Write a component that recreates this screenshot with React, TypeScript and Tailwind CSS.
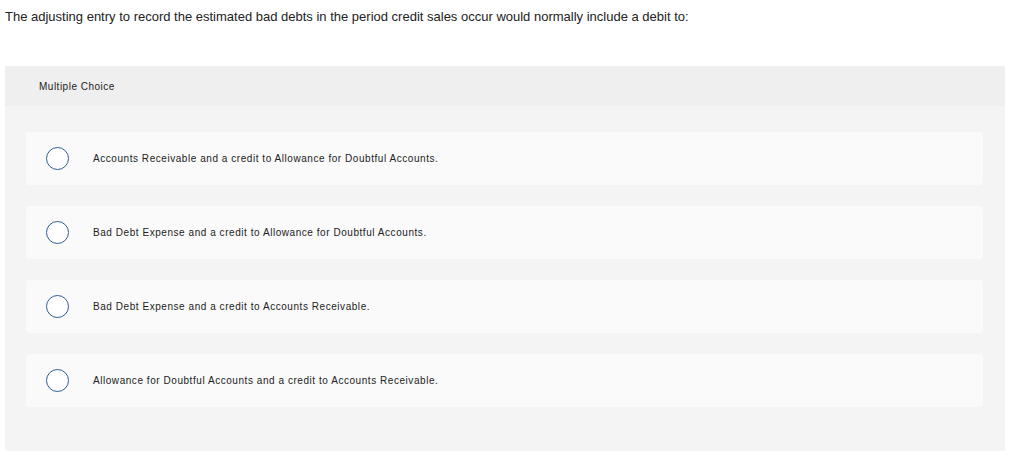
import React from "react";

const options = [
  "Accounts Receivable and a credit to Allowance for Doubtful Accounts.",
  "Bad Debt Expense and a credit to Allowance for Doubtful Accounts.",
  "Bad Debt Expense and a credit to Accounts Receivable.",
  "Allowance for Doubtful Accounts and a credit to Accounts Receivable.",
];

export default function App() {
  return (
    <div
      className="w-[1024px] h-[468px] bg-white text-[#222]"
      style={{ fontFamily: '"Liberation Sans", Arial, sans-serif' }}
    >
      <p className="pl-[5px] pt-[9px] text-[13px] leading-[15px] text-[#222]">
        The adjusting entry to record the estimated bad debts in the period credit sales occur would normally include a debit to:
      </p>
      <div className="mt-[42px] ml-[5px] w-[1000px] h-[385px] bg-[#f4f4f4] rounded-[2px] overflow-hidden">
        <div className="h-[40px] bg-[#efefef] flex items-center pl-[34px] text-[10px] tracking-[0.5px] text-[#222]">
          Multiple Choice
        </div>
        <div className="flex flex-col gap-[21px] pt-[26px] pl-[21px] pr-[22px]">
          {options.map((o) => (
            <div
              key={o}
              className="h-[53px] bg-[#fafafa] rounded-[4px] flex items-center"
            >
              <span className="ml-[20px] w-[23px] h-[23px] rounded-full border-[1.3px] border-[#2f5b94] bg-white shrink-0" />
              <span className="ml-[24px] text-[10px] tracking-[0.55px] text-[#222]">{o}</span>
            </div>
          ))}
        </div>
      </div>
    </div>
  );
}
